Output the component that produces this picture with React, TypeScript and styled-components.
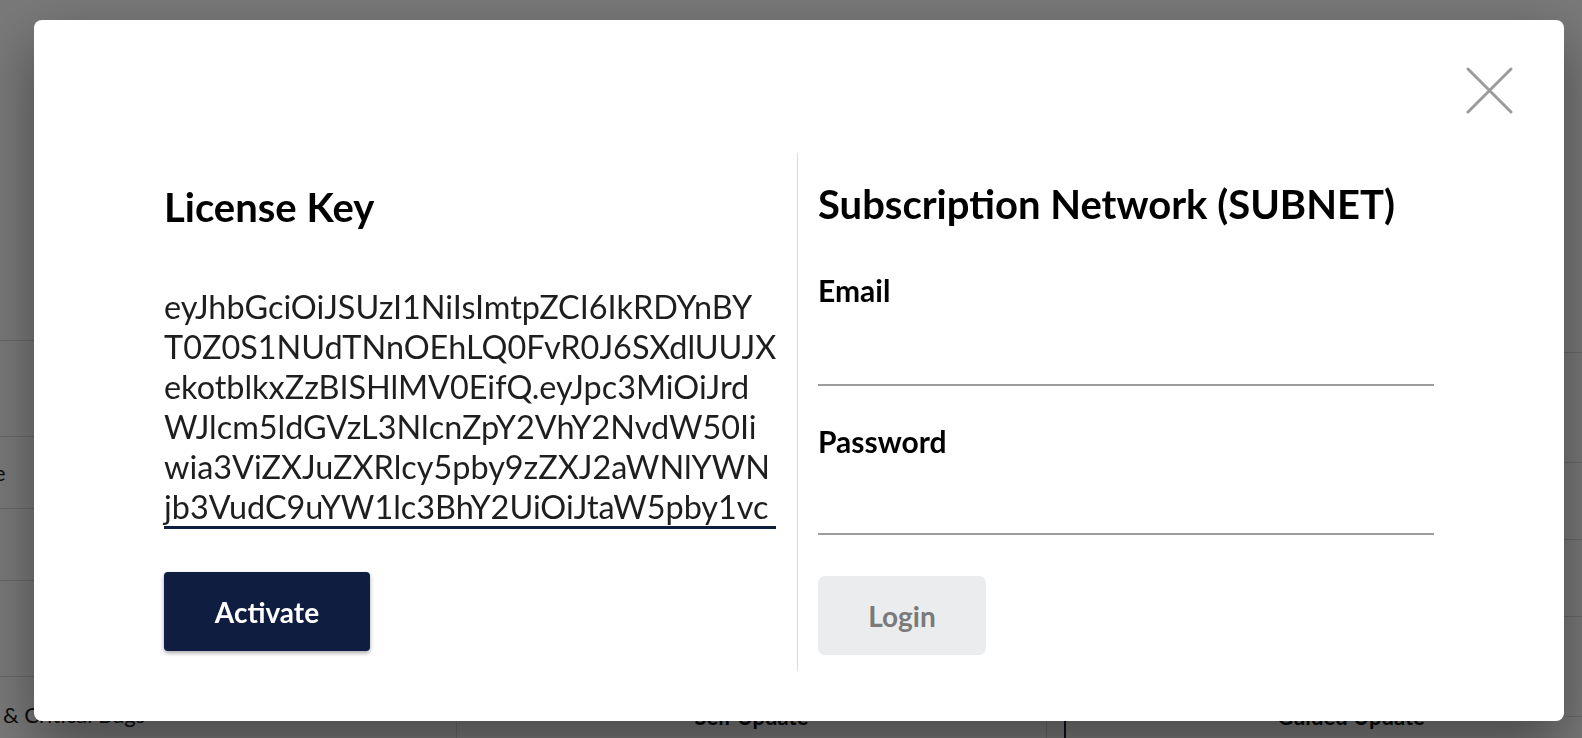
import React from "react";
import styled, { createGlobalStyle } from "styled-components";

const GlobalStyle = createGlobalStyle`
  html, body { margin: 0; padding: 0; height: 100%; overflow: hidden; }
  body { font-family: Lato, "Open Sans", Arial, sans-serif; background: #ffffff; }
  #root { height: 100%; }
  * { box-sizing: border-box; }
`;

/* ---------- background page (behind the overlay) ---------- */

const Page = styled.div`
  display: flex;
  align-items: flex-start;
  width: 1582px;
  height: 738px;
  overflow: hidden;
  padding-top: 120px;
  color: #111;
  background: #ffffff;
`;

const FeatureColumn = styled.div`
  width: 456px;
  flex: none;
  display: flex;
  flex-direction: column;
`;

const FeatureRow = styled.div<{ $h: number }>`
  height: ${(p) => p.$h}px;
  border-bottom: 1px solid #dcdcdc;
  display: flex;
  align-items: center;
  padding-left: 3px;
  font-size: 22px;
  color: #1a1a1a;
  overflow: hidden;
`;

const LastFeatureRow = styled.div`
  padding: 25px 0 0 3px;
  font-size: 22px;
  line-height: 26px;
  color: #1a1a1a;
  white-space: nowrap;
`;

const ClippedWord = styled.span`
  margin-left: -9px;
`;

const PlanColumn = styled.div`
  width: 590px;
  flex: none;
  align-self: stretch;
  border-left: 1px solid #dcdcdc;
  display: flex;
  flex-direction: column;
  justify-content: flex-end;
`;

const PlanCell = styled.div`
  text-align: center;
  font-size: 22px;
  line-height: 26px;
  font-weight: 700;
  color: #111;
  padding-bottom: 8px;
`;

const ColumnGap = styled.div`
  width: 18px;
  flex: none;
  align-self: stretch;
  border-left: 1px solid #dcdcdc;
`;

const HighlightColumn = styled.div`
  width: 572px;
  flex: none;
  align-self: stretch;
  border-left: 2px solid #1b2440;
  display: flex;
  flex-direction: column;
`;

const HighlightRow = styled.div<{ $h: number }>`
  height: ${(p) => p.$h}px;
  flex: none;
  border-bottom: 1px solid #dcdcdc;
`;

const HighlightCell = styled.div`
  text-align: center;
  font-size: 22px;
  line-height: 26px;
  font-weight: 700;
  color: #111;
  margin-top: -13px;
`;

/* ---------- overlay + modal ---------- */

const Overlay = styled.div`
  position: fixed;
  inset: 0;
  background: rgba(0, 0, 0, 0.53);
  display: flex;
  align-items: flex-start;
  padding: 20px 0 0 34px;
`;

const Modal = styled.div`
  width: 1530px;
  height: 701px;
  flex: none;
  background: #ffffff;
  border-radius: 8px;
  box-shadow: 0 24px 56px rgba(0, 0, 0, 0.4);
  display: flex;
  flex-direction: column;
`;

const CloseRow = styled.div`
  display: flex;
  justify-content: flex-end;
  padding: 47px 51px 0 0;
`;

const CloseButton = styled.button`
  width: 47px;
  height: 47px;
  padding: 0;
  border: none;
  background: transparent;
  cursor: pointer;
  display: block;
  svg { display: block; }
`;

const Body = styled.div`
  display: flex;
  margin-top: 39px;
  padding-left: 130px;
  height: 518px;
`;

const Pane = styled.div<{ $w: number; $top: number }>`
  width: ${(p) => p.$w}px;
  flex: none;
  padding-top: ${(p) => p.$top}px;
  display: flex;
  flex-direction: column;
  align-items: flex-start;
`;

const Divider = styled.div`
  width: 1px;
  flex: none;
  background: #dadada;
  margin: 0 20px 0 21px;
`;

const Heading = styled.h2`
  margin: 0;
  font-size: 40px;
  line-height: 48px;
  font-weight: 700;
  color: #000;
  white-space: nowrap;
`;

const KeyBox = styled.div`
  width: 100%;
  margin-top: 56px;
  height: 242px;
  border-bottom: 3px solid #0f1d3e;
  font-size: 32.4px;
  line-height: 40px;
  color: #1e1e1e;
`;

const KeyLine = styled.span`
  display: block;
  white-space: nowrap;
`;

const FieldLabel = styled.label<{ $mt: number }>`
  display: block;
  margin-top: ${(p) => p.$mt}px;
  font-size: 30px;
  line-height: 36px;
  font-weight: 700;
  color: #000;
`;

const FieldInput = styled.input<{ $h: number }>`
  display: block;
  width: 100%;
  height: ${(p) => p.$h}px;
  border: none;
  border-bottom: 2px solid #9c9c9c;
  outline: none;
  background: transparent;
  font: 400 28px Lato, sans-serif;
`;

const Button = styled.button<{ $variant: "primary" | "disabled"; $w: number; $mt: number }>`
  margin-top: ${(p) => p.$mt}px;
  width: ${(p) => p.$w}px;
  height: 79px;
  border: none;
  font-family: Lato, sans-serif;
  font-size: 28px;
  font-weight: 700;
  cursor: ${(p) => (p.$variant === "primary" ? "pointer" : "default")};
  border-radius: ${(p) => (p.$variant === "primary" ? "4px" : "7px")};
  background: ${(p) => (p.$variant === "primary" ? "#0f1e40" : "#ebecee")};
  color: ${(p) => (p.$variant === "primary" ? "#ffffff" : "#7a7a7a")};
  box-shadow: ${(p) =>
    p.$variant === "primary" ? "0 2px 4px rgba(0,0,0,0.35)" : "none"};
`;

const keyLines = [
  "eyJhbGciOiJSUzI1NiIsImtpZCI6IkRDYnBY",
  "T0Z0S1NUdTNnOEhLQ0FvR0J6SXdlUUJX",
  "ekotblkxZzBISHlMV0EifQ.eyJpc3MiOiJrd",
  "WJlcm5ldGVzL3NlcnZpY2VhY2NvdW50Ii",
  "wia3ViZXJuZXRlcy5pby9zZXJ2aWNlYWN",
  "jb3VudC9uYW1lc3BhY2UiOiJtaW5pby1vc",
];

export default function App() {
  return (
    <>
      <GlobalStyle />
      <Page>
        <FeatureColumn>
          <FeatureRow $h={221} />
          <FeatureRow $h={96} />
          <FeatureRow $h={72}>
            <ClippedWord>e</ClippedWord>
          </FeatureRow>
          <FeatureRow $h={72} />
          <FeatureRow $h={96} />
          <LastFeatureRow>&amp; Critical Bugs</LastFeatureRow>
        </FeatureColumn>
        <PlanColumn>
          <PlanCell>Self Update</PlanCell>
        </PlanColumn>
        <ColumnGap />
        <HighlightColumn>
          <HighlightRow $h={233} />
          <HighlightRow $h={110} />
          <HighlightRow $h={77} />
          <HighlightRow $h={77} />
          <HighlightRow $h={100} />
          <HighlightCell>Guided Update</HighlightCell>
        </HighlightColumn>
      </Page>

      <Overlay>
        <Modal role="dialog" aria-label="License">
          <CloseRow>
            <CloseButton aria-label="Close">
              <svg width="47" height="47" viewBox="0 0 47 47">
                <path
                  d="M2 2 L45 45 M45 2 L2 45"
                  stroke="#9b9b9b"
                  strokeWidth="3"
                  strokeLinecap="round"
                  fill="none"
                />
              </svg>
            </CloseButton>
          </CloseRow>
          <Body>
            <Pane $w={612} $top={30}>
              <Heading>License Key</Heading>
              <KeyBox>
                {keyLines.map((l) => (
                  <KeyLine key={l}>{l}</KeyLine>
                ))}
              </KeyBox>
              <Button $variant="primary" $w={206} $mt={43}>
                Activate
              </Button>
            </Pane>
            <Divider />
            <Pane $w={616} $top={27}>
              <Heading>Subscription Network (SUBNET)</Heading>
              <FieldLabel $mt={44}>Email</FieldLabel>
              <FieldInput $h={78} type="email" aria-label="Email" />
              <FieldLabel $mt={37}>Password</FieldLabel>
              <FieldInput $h={76} type="password" aria-label="Password" />
              <Button $variant="disabled" $w={168} $mt={41} disabled>
                Login
              </Button>
            </Pane>
          </Body>
        </Modal>
      </Overlay>
    </>
  );
}
